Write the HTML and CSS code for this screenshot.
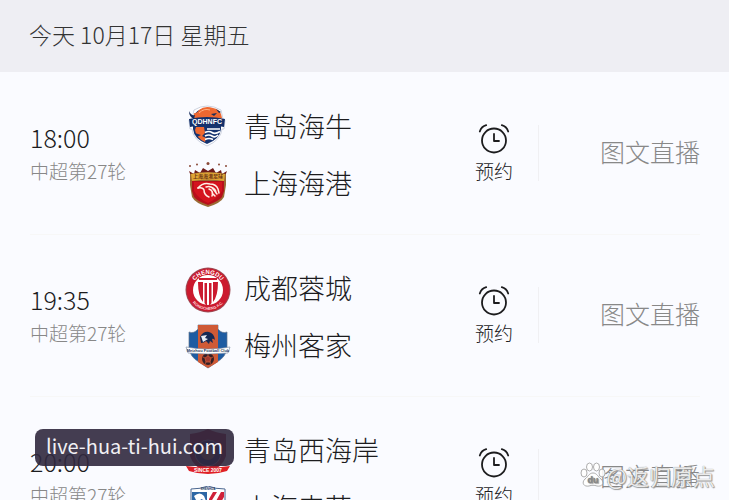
FILE: index.html
```html
<!DOCTYPE html>
<html lang="zh-CN">
<head>
    <meta charset="UTF-8">
    <meta name="viewport" content="width=device-width, initial-scale=1.0">
    <title>中超赛程</title>
    <link rel="stylesheet" href="styles.css">
</head>
<body>

    <!-- shared alarm clock icon -->
    <svg class="sprite" aria-hidden="true">
        <symbol id="clock" viewBox="0 0 32 32">
            <g fill="none" stroke="#1c1c1e" stroke-width="1.8" stroke-linecap="round" stroke-linejoin="round">
                <circle cx="16" cy="17.500" r="12"/>
                <path d="M16 11v7h5"/>
                <path d="M1.800 8.500C3 5 5 3 8.200 2.200M23.800 2.200C27 3 29 5 30.200 8.500"/>
            </g>
        </symbol>
    </svg>

    <div class="page">
        <header class="date-bar">
            <h1>今天 10月17日 星期五</h1>
        </header>

        <main class="matches">
            <section class="match">
                <div class="when">
                    <time datetime="18:00">18:00</time>
                    <span class="round">中超第27轮</span>
                </div>
                <div class="teams">
                    <div class="team">
                        <svg class="logo" viewBox="0 0 46 46" aria-hidden="true">
                            <path d="M9 5Q22-3 36 5l2 9 2 1-1 9h-2Q36 35 22 41 8 35 7 24H5L4 15l3-1z" fill="#fff" stroke="#b9c0d3" stroke-width=".7"/>
                            <path d="M8 13Q10 4 22 3 33 4 36 13v11Q35 34 22 39 9 34 8 24z" fill="#15336f"/>
                            <path d="M9 8q3 1 5-3 6-5 14-2 6 1 8 6l1 4-3 2-4-1-2 3H11q-3-5-2-9z" fill="#ee6831"/>
                            <path d="M4 6q2 5 6 4l-1 4Q4 12 4 6zM26 9l6-1-3 3zM31 4l5 3-2 1z" fill="#172c5c"/>
                            <path d="M14 8q5-5 11-3" fill="none" stroke="#ffb083"/>
                            <path d="M11 22h8l1 6-3 3 4 2-1 4Q11 33 10 25z" fill="#ee6831"/>
                            <path d="M10 28l6 2-4 2z" fill="#15336f"/>
                            <path d="M22 24h13M20 27.500q4-2 7 0t8-1M20 31q4-2 7 0t6-1M20 34.500q4-2 8 0" fill="none" stroke="#fff" stroke-width="1.700"/>
                            <path d="M4 14q18-4 36 0l-1 8q-17-4-34 0z" fill="#14306a"/>
                            <text x="22" y="19" class="logo-text" font-size="7" fill="#fff">QDHNFC</text>
                        </svg>
                        <span>青岛海牛</span>
                    </div>
                    <div class="team">
                        <svg class="logo" viewBox="0 0 46 46" aria-hidden="true">
                            <path d="M4 9l5 3 1-4 5 3 3-5 5 3 5-3 3 5 5-3 1 4 5-3-3 8H7z" fill="#6e1b19"/>
                            <g fill="#8a4a39"><circle cx="5" cy="4" r="1"/><circle cx="12" cy="2.500" r="1"/><circle cx="23" cy="1.500" r="1.500"/><circle cx="34" cy="2.500" r="1"/><circle cx="41" cy="4" r="1"/></g>
                            <path d="M5 12q18-4 36 0v11l-2 12q-3 6-16 10Q10 41 7 35L5 23z" fill="#9b6a35"/>
                            <path d="M7 19h32v10l-2 6q-3 4-14 8-11-4-14-8l-2-6z" fill="#b70f1b"/>
                            <path d="M9 20h28v9q-5 8-14 12-9-4-14-12z" fill="#d4141f"/>
                            <path d="M6 12q17-3 34 0l-1 7q-16-3-32 0z" fill="#dfa535"/>
                            <text x="23" y="16" class="logo-text" font-size="5" fill="#6b3013">上海海港足球</text>
                            <!-- eagle head -->
                            <g fill="none" stroke="#fff0e8" stroke-width="1.500" stroke-linecap="round">
                                <path d="M13 26q5-6 12-4 6 0 8 5l1 4"/>
                                <path d="M13 26q5-1 6 2 0 5 5 7"/>
                                <path d="M21 25q5-2 8 3l3 4M26 25q5 2 5 6M27 31l3 3M24 27q5 2 3 7"/>
                            </g>
                        </svg>
                        <span>上海海港</span>
                    </div>
                </div>
                <button class="remind" type="button">
                    <svg viewBox="0 0 32 32" aria-hidden="true"><use href="#clock"/></svg>
                    <span>预约</span>
                </button>
                <a class="live" href="#">图文直播</a>
            </section>

            <section class="match">
                <div class="when">
                    <time datetime="19:35">19:35</time>
                    <span class="round">中超第27轮</span>
                </div>
                <div class="teams">
                    <div class="team">
                        <svg class="logo" viewBox="0 0 46 46" aria-hidden="true">
                            <defs>
                                <path id="ring-top" d="M7 23a16 16 0 0 1 32 0"/>
                                <path id="ring-bottom" d="M3 23a20 20 0 0 0 40 0"/>
                            </defs>
                            <circle cx="23" cy="23" r="22.500" fill="#9e4b55"/>
                            <circle cx="23" cy="23" r="21.500" fill="#cb1a2e"/>
                            <circle cx="23" cy="23" r="15" fill="#fff"/>
                            <path d="M14 11h18v2H14z" fill="#cb1a2e"/>
                            <path d="M13 15h5v20q-5-6-5-20zM19.500 16h2.500v22h-1l-1.500-2zM24 16h2.500v20L25 38h-1zM28 15h5q0 14-5 20z" fill="#cb1a2e"/>
                            <text class="logo-text" font-size="6" fill="#fff"><textPath href="#ring-top" startOffset="50%">CHENGDU</textPath></text>
                            <text class="logo-text" font-size="4" fill="#ffd9dd"><textPath href="#ring-bottom" startOffset="50%">RONGCHENG F.C.</textPath></text>
                        </svg>
                        <span>成都蓉城</span>
                    </div>
                    <div class="team">
                        <svg class="logo" viewBox="0 0 46 46" aria-hidden="true">
                            <path d="M4 8q5 2 9-3V1h20v4q4 5 9 3v16q-1 9-10 14l-9 6-9-6Q5 33 4 24z" fill="#1e5ca2" stroke="#60728c" stroke-width=".7"/>
                            <path d="M13 1h20v37l-10 6-10-6z" fill="#cf5a36"/>
                            <path d="M15 13q3-6 9-5 5 1 6 8-2-2-3-1l1 4-3-2-1 3-3-3q-2 2-5 2z" fill="#142954"/>
                            <path d="M16 12l6-1-2 3 3 1-5 3z" fill="#e8edf6"/>
                            <circle cx="23" cy="35" r="6" fill="#352027"/>
                            <path d="M23 32l3 2-1 4h-4l-1-4zM23 29v3M28 33l-2 1M26 40l-1-2M20 40l1-2M18 33l2 1" fill="#a43b30" stroke="#cf5a36" stroke-width=".8"/>
                            <path d="M1 23q22 4 44 0l-2 6q-20 2-40 0z" fill="#fff" stroke="#71829c" stroke-width=".6"/>
                            <text x="23" y="28" class="logo-text" font-size="4" fill="#23375c">Meizhou Football Club</text>
                        </svg>
                        <span>梅州客家</span>
                    </div>
                </div>
                <button class="remind" type="button">
                    <svg viewBox="0 0 32 32" aria-hidden="true"><use href="#clock"/></svg>
                    <span>预约</span>
                </button>
                <a class="live" href="#">图文直播</a>
            </section>

            <section class="match">
                <div class="when">
                    <time datetime="20:00">20:00</time>
                    <span class="round">中超第27轮</span>
                </div>
                <div class="teams">
                    <div class="team">
                        <svg class="logo" viewBox="0 0 46 46" aria-hidden="true">
                            <path d="M5 5Q15 4 23 0q8 4 18 5v22q-3 11-18 17Q8 38 5 27z" fill="#a32232"/>
                            <circle cx="23" cy="24" r="13" fill="#20366d" stroke="#a9a4b4"/>
                            <circle cx="23" cy="24" r="7" fill="#b08450"/>
                            <path d="M1 37q22 3 44 0l-3 5q-9 3-19 3T4 42z" fill="#df2026"/>
                            <text x="23" y="43" class="logo-text" font-size="5" fill="#fff">SINCE 2007</text>
                        </svg>
                        <span>青岛西海岸</span>
                    </div>
                    <div class="team">
                        <svg class="logo" viewBox="0 0 46 46" aria-hidden="true">
                            <path d="M6 3q10 0 17-3 7 3 17 3v29q-4 9-17 13Q10 41 6 32z" fill="#fff" stroke="#49658f"/>
                            <path d="M7 6h15v24H7z" fill="#2d67a5"/>
                            <path d="M9 10q6-5 10 0l2 5-5-2-2 5-3-4z" fill="#fff"/>
                            <path d="M28 6h4l-8 13v-6zM36 6h3v5l-10 17h-5z" fill="#cf2139"/>
                            <text x="23" y="4" class="logo-text" font-size="3" fill="#23375c">SHENHUA</text>
                        </svg>
                        <span>上海申花</span>
                    </div>
                </div>
                <button class="remind" type="button">
                    <svg viewBox="0 0 32 32" aria-hidden="true"><use href="#clock"/></svg>
                    <span>预约</span>
                </button>
                <a class="live" href="#">图文直播</a>
            </section>
        </main>

        <div class="site-badge">live-hua-ti-hui.com</div>

        <div class="author">
            <svg viewBox="0 0 26 26" aria-hidden="true">
                <g fill="#fff" fill-opacity=".85" stroke="#999" stroke-width=".8">
                    <ellipse cx="4" cy="11" rx="3" ry="4"/>
                    <ellipse cx="9.500" cy="5" rx="3" ry="4"/>
                    <ellipse cx="16.500" cy="5" rx="3" ry="4"/>
                    <ellipse cx="22" cy="11" rx="3" ry="4"/>
                    <path d="M13 11c4 0 5 4 8 6 4 4 1 8-4 7-3-1-5-1-8 0-5 1-8-3-4-7 3-2 4-6 8-6z"/>
                </g>
                <text x="13" y="21" class="logo-text" font-size="9" fill="#888">du</text>
            </svg>
            <span>@返归原点</span>
        </div>
    </div>

</body>
</html>
```
FILE: styles.css
```css
* {
    box-sizing: border-box;
}

body {
    margin: 0;
    background-color: #fafbff;
    color: #1c1c1e;
    font-family: "Noto Sans CJK SC", sans-serif;
    font-weight: 300;
}

.sprite {
    position: absolute;
    width: 0;
    height: 0;
}

.page {
    position: relative;
    height: 100vh;
    overflow: hidden;
}

.date-bar {
    padding: 16px 29px 20px;
    background-color: #eeeef3;
}

.date-bar h1 {
    margin: 0;
    font-size: 23px;
    font-weight: 300;
    line-height: 36px;
    color: #333;
}

.matches {
    padding: 1px 29px 0 30px;
}

.match {
    display: flex;
    align-items: center;
    padding: 26px 0 21px;
    border-bottom: 1px solid #f7f7f7;
}

.when {
    display: flex;
    flex-direction: column;
    width: 155px;
    padding-bottom: 4px;
    line-height: 33px;
}

.when time {
    font-size: 25px;
}

.round {
    font-size: 19px;
    color: #888;
}

.teams {
    flex: 1;
}

.team {
    display: flex;
    align-items: center;
    gap: 13px;
    height: 57px;
    font-size: 27px;
    white-space: nowrap;
}

.team span {
    padding-bottom: 4px;
}

.logo {
    width: 46px;
    height: 46px;
}

.logo-text {
    font-family: "Liberation Sans", "Noto Sans CJK SC", sans-serif;
    font-weight: bold;
    text-anchor: middle;
}

.remind {
    display: flex;
    flex-direction: column;
    align-items: center;
    padding: 0 0 3px;
    border: 0;
    background: none;
    color: inherit;
    font: inherit;
    font-size: 19px;
    line-height: 32px;
    cursor: pointer;
}

.remind svg {
    width: 32px;
    height: 32px;
}

.live {
    width: 162px;
    margin: 0 0 6px 25px;
    padding-bottom: 4px;
    border-left: 1px solid #f0f0f3;
    font-size: 25px;
    line-height: 52px;
    text-align: right;
    text-decoration: none;
    color: #888;
}

.site-badge {
    position: absolute;
    left: 35px;
    bottom: 34px;
    padding: 2px 11px 6px;
    border-radius: 8px;
    background-color: rgba(48, 40, 62, 0.9);
    color: #f1f0f4;
    font-size: 20px;
    font-weight: 400;
    line-height: 29px;
}

.author {
    position: absolute;
    right: 14px;
    bottom: 9px;
    display: flex;
    align-items: center;
    color: rgba(255, 255, 255, 0.85);
    font-size: 22px;
    font-weight: 400;
    line-height: 32px;
    text-shadow: 0 0 1px #777, 1px 1px 1px #999;
}

.author svg {
    width: 26px;
    height: 26px;
}
```
